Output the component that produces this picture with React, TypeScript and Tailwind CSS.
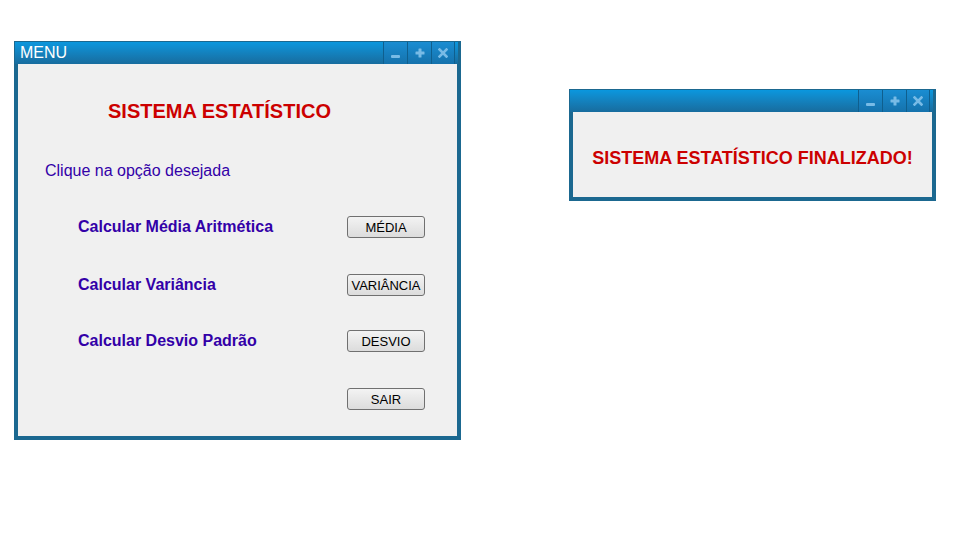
import React from "react";

const font = { fontFamily: '"Liberation Sans", Arial, Helvetica, sans-serif' };

function TitleButtons() {
  return (
    <div className="flex h-full mr-[3px]">
      <div className="w-[24px] h-full border-l border-[#0f5f8e] bg-gradient-to-b from-[#1a8dd2] to-[#1572ac] flex items-end justify-center pb-[6px]">
        <div className="w-[9px] h-[3px] bg-[#78bbe6] rounded-[1px]" />
      </div>
      <div className="w-[24px] h-full border-l border-[#0f5f8e] bg-gradient-to-b from-[#1a8dd2] to-[#1572ac] flex items-center justify-center">
        <svg width="10" height="10" viewBox="0 0 10 10">
          <rect x="3.5" y="0.5" width="3" height="9" fill="#78bbe6" rx="0.5" />
          <rect x="0.5" y="3.5" width="9" height="3" fill="#78bbe6" rx="0.5" />
        </svg>
      </div>
      <div className="w-[24px] h-full border-l border-r border-[#0f5f8e] bg-gradient-to-b from-[#1a8dd2] to-[#1572ac] flex items-center justify-center">
        <svg width="10" height="10" viewBox="0 0 10 10">
          <path d="M1.5 1.5 L8.5 8.5 M8.5 1.5 L1.5 8.5" stroke="#78bbe6" strokeWidth="2.6" strokeLinecap="square" />
        </svg>
      </div>
    </div>
  );
}

function Window({
  title,
  className,
  children,
}: {
  title?: string;
  className: string;
  children: React.ReactNode;
}) {
  return (
    <div className={`flex flex-col bg-[#1b6890] ${className}`}>
      <div className="mt-px ml-px mr-[3px] h-[22px] flex items-stretch justify-between bg-gradient-to-b from-[#0a97de] to-[#176c9e]">
        <div className="pl-[5px] text-white text-[16px] leading-[22px]" style={font}>
          {title}
        </div>
        <TitleButtons />
      </div>
      <div className="flex-1 mx-[4px] mb-[4px] bg-[#f0f0f0]">{children}</div>
    </div>
  );
}

function Btn({ label }: { label: string }) {
  return (
    <div
      className="w-[78px] h-[22px] rounded-[3px] border border-[#707070] bg-gradient-to-b from-[#f3f3f3] to-[#dcdcdc] flex items-center justify-center text-[13px] text-black leading-none"
      style={font}
    >
      {label}
    </div>
  );
}

function Row({ label, button, mt }: { label: string; button: string; mt: string }) {
  return (
    <div className={`flex items-center h-[22px] pl-[60px] pr-[32px] ${mt}`}>
      <div className="flex-1 text-[16px] font-bold text-[#3300a8] leading-none" style={font}>
        {label}
      </div>
      <Btn label={button} />
    </div>
  );
}

export default function App() {
  return (
    <div className="min-h-[535px] w-[977px] bg-white flex items-start pt-[41px] pl-[14px]" style={font}>
      <Window title="MENU" className="w-[447px] h-[399px]">
        <div className="flex flex-col">
          <div className="mt-[36px] pl-[90px] h-[22px] leading-[22px] text-[20px] font-bold text-[#cc0000]">
            SISTEMA ESTATÍSTICO
          </div>
          <div className="mt-[39px] pl-[27px] h-[20px] leading-[20px] text-[16px] text-[#3300a8]">
            Clique na opção desejada
          </div>
          <Row label="Calcular Média Aritmética" button="MÉDIA" mt="mt-[35px]" />
          <Row label="Calcular Variância" button="VARIÂNCIA" mt="mt-[36px]" />
          <Row label="Calcular Desvio Padrão" button="DESVIO" mt="mt-[34px]" />
          <div className="mt-[36px] flex justify-end pr-[32px]">
            <Btn label="SAIR" />
          </div>
        </div>
      </Window>
      <Window className="ml-[108px] mt-[48px] w-[367px] h-[112px]">
        <div className="pt-[35px] h-full text-center text-[18px] leading-[22px] font-bold text-[#cc0000]">
          SISTEMA ESTATÍSTICO FINALIZADO!
        </div>
      </Window>
    </div>
  );
}
